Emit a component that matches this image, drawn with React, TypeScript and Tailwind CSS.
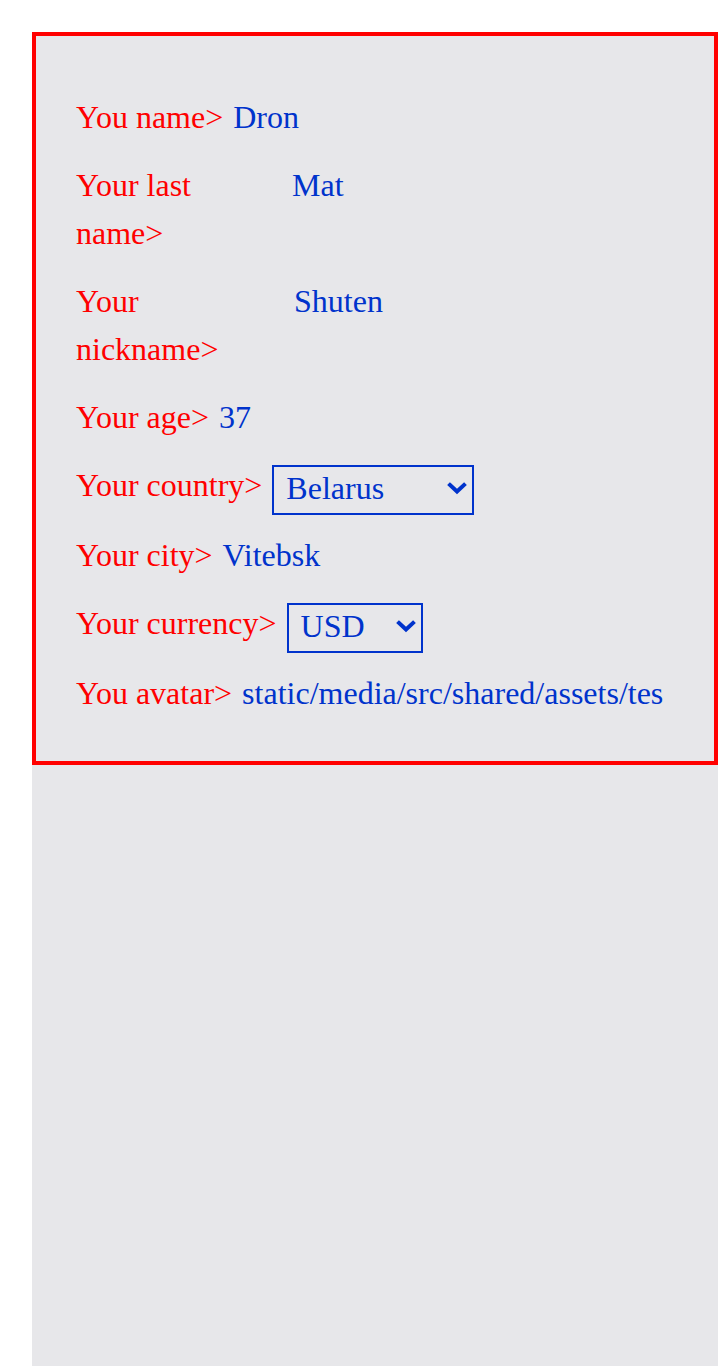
import React from "react";

interface Profile {
  first: string;
  lastname: string;
  username: string;
  age: number;
  country: string;
  city: string;
  currency: string;
  avatar: string;
}

const profile: Profile = {
  first: "Dron",
  lastname: "Mat",
  username: "Shuten",
  age: 37,
  country: "Belarus",
  city: "Vitebsk",
  currency: "USD",
  avatar: "static/media/src/shared/assets/tests/storybook.jpg",
};

const countries = ["Russia", "Belarus", "Ukraine", "Kazakhstan", "Armenia"];
const currencies = ["RUB", "EUR", "USD"];

const Chevron = () => (
  <svg className="w-[20px] h-[14px]" viewBox="0 0 20 14" fill="none">
    <path d="M3 4l7 6.5L17 4" stroke="#0033cc" strokeWidth={4} strokeLinecap="square" strokeLinejoin="miter" />
  </svg>
);

const Select: React.FC<{ value: string; options: string[]; width: string }> = ({ value, options, width }) => (
  <div className={`relative mt-[3px] -mb-[4px] shrink-0 ${width}`}>
    <select
      defaultValue={value}
      className="appearance-none w-full h-[50px] border-2 border-[#0033cc] bg-transparent pl-[12px] pr-[30px] pt-0 pb-[4px] leading-[40px] text-[#0033cc] outline-none"
    >
      {options.map((o) => (
        <option key={o} value={o}>
          {o}
        </option>
      ))}
    </select>
    <span className="pointer-events-none absolute right-[7px] top-[17px]">
      <Chevron />
    </span>
  </div>
);

const Row: React.FC<{ label: string; labelClass?: string; children: React.ReactNode; align?: string }> = ({
  label,
  labelClass = "",
  children,
  align = "items-baseline",
}) => (
  <div className={`flex ${align} gap-[10px]`}>
    <span className={`text-[#ff0000] shrink-0 ${labelClass}`}>{label}</span>
    {children}
  </div>
);

const Value: React.FC<{ children: React.ReactNode }> = ({ children }) => (
  <span className="text-[#0033cc]">{children}</span>
);

export default function App() {
  return (
    <div className="min-h-screen bg-white pl-[32px] pt-[32px] font-['Liberation_Serif','Times_New_Roman',serif] text-[32px] leading-[48px]">
      <div className="min-h-[1334px] bg-[#e7e7ea]">
        {/* Profile card */}
        <div className="border-4 border-[#ff0000] pl-[40px] pr-[40px] pt-[57px] pb-[44px] flex flex-col gap-[20px]">
          <Row label="You name>">
            <Value>{profile.first}</Value>
          </Row>
          <Row label="Your last name>" labelClass="w-[206px]">
            <Value>{profile.lastname}</Value>
          </Row>
          <Row label="Your nickname>" labelClass="w-[208px]">
            <Value>{profile.username}</Value>
          </Row>
          <Row label="Your age>">
            <Value>{profile.age}</Value>
          </Row>
          <Row label="Your country>" align="items-start">
            <Select value={profile.country} options={countries} width="w-[202px]" />
          </Row>
          <Row label="Your city>">
            <Value>{profile.city}</Value>
          </Row>
          <Row label="Your currency>" align="items-start">
            <Select value={profile.currency} options={currencies} width="w-[136px]" />
          </Row>
          <Row label="You avatar>">
            <span className="text-[#0033cc] w-[421px] overflow-hidden whitespace-nowrap">{profile.avatar}</span>
          </Row>
        </div>
      </div>
    </div>
  );
}
